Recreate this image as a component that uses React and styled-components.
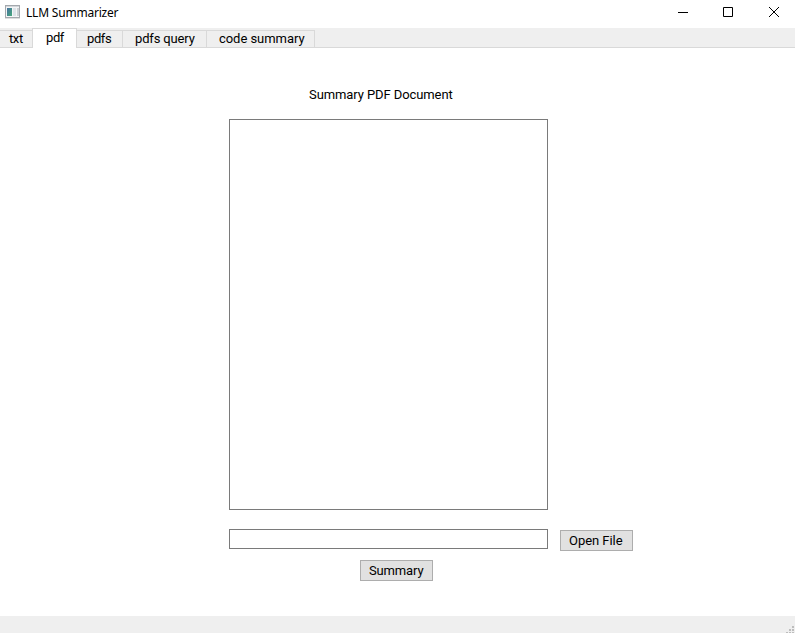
import React from "react";
import styled, { createGlobalStyle } from "styled-components";

const GlobalStyle = createGlobalStyle`
  * { box-sizing: border-box; }
  body { margin: 0; background: #fff; overflow: hidden; }
`;

const Window = styled.div`
  width: 795px;
  height: 633px;
  display: flex;
  flex-direction: column;
  background: #fff;
  color: #000;
  font: 400 13px/16px Roboto, "Liberation Sans", sans-serif;
  white-space: nowrap;
`;

const TitleBar = styled.header`
  height: 28px;
  flex: none;
  display: flex;
  align-items: flex-start;
  padding: 5px 0 0 5px;
`;

const AppTitle = styled.h1`
  margin: 0 auto 0 6px;
  font: 12px/16px "Noto Sans", sans-serif;
  letter-spacing: -0.2px;
`;

const Controls = styled.div`
  display: flex;
  gap: 35px;
  padding: 1px 15px 0 0;
`;

const ControlButton = styled.button`
  width: 11px;
  height: 12px;
  padding: 0;
  border: 0;
  background: none;
  display: block;
  svg { display: block; }
`;

const TabBar = styled.nav`
  height: 20px;
  flex: none;
  display: flex;
  align-items: flex-end;
  background: #efefef;
  box-shadow: inset 0 -1px #d9d9d9;
`;

const Tab = styled.button`
  width: ${(p) => p.$width}px;
  height: ${(p) => (p.$active ? 20 : 18)}px;
  padding: 0 0 ${(p) => (p.$active ? 2 : 0)}px ${(p) => p.$indent}px;
  border: solid #d9d9d9;
  border-width: ${(p) => (p.$active ? "1px 1px 0" : p.$divided ? "1px 1px 1px 0" : "1px 0 1px 0")};
  background: ${(p) => (p.$active ? "#fff" : "#efefef")};
  color: inherit;
  font: inherit;
  line-height: 16px;
  letter-spacing: ${(p) => p.$spacing}px;
  text-align: left;
`;

const Page = styled.main`
  flex: 1;
  display: flex;
  flex-direction: column;
  align-items: flex-start;
  padding: 39px 0 0 229px;
`;

const Heading = styled.h2`
  margin: 0 0 16px 80px;
  font: inherit;
  letter-spacing: -0.09px;
`;

const ResultArea = styled.textarea`
  width: 319px;
  height: 391px;
  margin: 0 0 19px;
  border: 1px solid #7a7a7a;
  outline: 0;
  resize: none;
  background: #fff;
  display: block;
`;

const FileRow = styled.div`
  display: flex;
  gap: 12px;
  height: 31px;
`;

const PathInput = styled.input`
  width: 319px;
  height: 20px;
  border: 1px solid #7a7a7a;
  outline: 0;
  padding: 0 4px;
`;

const PushButton = styled.button`
  width: 73px;
  height: 21px;
  margin: ${(p) => p.$margin};
  padding: 0 0 0 8px;
  border: 1px solid #adadad;
  background: #e1e1e1;
  color: #000;
  font: inherit;
  line-height: 19px;
  letter-spacing: ${(p) => p.$spacing}px;
  text-align: left;
`;

const StatusBar = styled.footer`
  height: 17px;
  flex: none;
  display: flex;
  justify-content: flex-end;
  background: #efefef;
`;

const tabs = [
  { label: "txt", width: 32, indent: 9, spacing: -0.4 },
  { label: "pdf", width: 45, indent: 13, spacing: -0.4, active: true },
  { label: "pdfs", width: 46, indent: 10, spacing: -0.4, divided: true },
  { label: "pdfs query", width: 84, indent: 12, spacing: -0.15, divided: true },
  { label: "code summary", width: 108, indent: 12, spacing: -0.05, divided: true },
];

const AppIcon = () => (
  <svg width="15" height="14" viewBox="0 0 15 14" shapeRendering="crispEdges">
    <defs>
      <linearGradient id="pane" x1="0" y1="0" x2="1" y2="1">
        <stop offset="0" stopColor="#4671a0" />
        <stop offset="1" stopColor="#47a97b" />
      </linearGradient>
    </defs>
    <rect width="15" height="13" fill="#a4a8ad" />
    <rect y="13" width="15" height="1" fill="#dedede" />
    <rect x="1" y="1" width="13" height="1" fill="#d2d6da" />
    <rect x="1" y="2" width="13" height="10" fill="#f4f5f6" />
    <rect x="2" y="3" width="5" height="8" fill="url(#pane)" />
    <rect x="8" y="3" width="3" height="8" fill="#dde3e8" />
    <rect x="12" y="3" width="2" height="8" fill="#cbd0d4" />
  </svg>
);

export default function App() {
  return (
    <>
      <GlobalStyle />
      <Window>
        <TitleBar>
          <AppIcon />
          <AppTitle>LLM Summarizer</AppTitle>
          <Controls>
            <ControlButton aria-label="Minimize">
              <svg width="11" height="12"><path d="M1 6.5h10" stroke="#000" /></svg>
            </ControlButton>
            <ControlButton aria-label="Maximize">
              <svg width="11" height="12"><path d="M.5 1.5h9v9h-9z" fill="none" stroke="#000" /></svg>
            </ControlButton>
            <ControlButton aria-label="Close">
              <svg width="11" height="12"><path d="M0 1l10 10M10 1L0 11" stroke="#000" /></svg>
            </ControlButton>
          </Controls>
        </TitleBar>
        <TabBar>
          {tabs.map((t) => (
            <Tab
              key={t.label}
              $width={t.width}
              $indent={t.indent}
              $spacing={t.spacing}
              $active={t.active}
              $divided={t.divided}
            >
              {t.label}
            </Tab>
          ))}
        </TabBar>
        <Page>
          <Heading>Summary PDF Document</Heading>
          <ResultArea />
          <FileRow>
            <PathInput />
            <PushButton $margin="1px 0 0" $spacing={-0.05}>Open File</PushButton>
          </FileRow>
          <PushButton $margin="0 0 0 131px" $spacing={-0.15}>Summary</PushButton>
        </Page>
        <StatusBar>
          <svg width="9" height="17" fill="#bdbdbd" shapeRendering="crispEdges">
            <path d="M6 10h2v2h-2zM3 13h2v2h-2zM6 13h2v2h-2zM0 16h2v1h-2zM3 16h2v1h-2zM6 16h2v1h-2z" />
          </svg>
        </StatusBar>
      </Window>
    </>
  );
}
